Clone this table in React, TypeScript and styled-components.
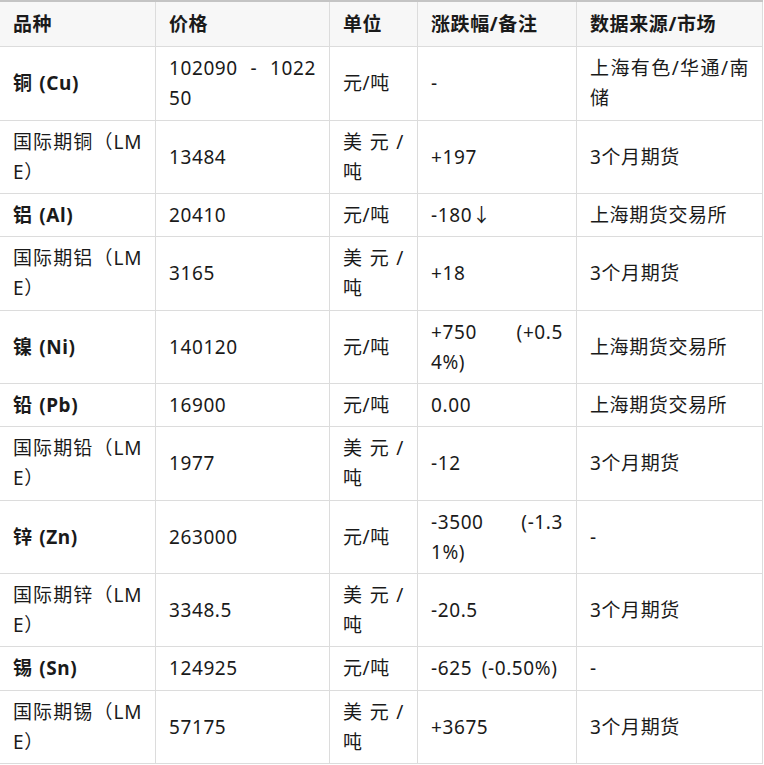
import React from 'react';
import styled, { createGlobalStyle } from 'styled-components';

const GlobalStyle = createGlobalStyle`
  html, body {
    margin: 0;
    padding: 0;
    background: #ffffff;
  }
  body {
    font-family: "Noto Sans", "Noto Sans CJK SC", sans-serif;
    color: #1a1a1a;
  }
`;

const Wrapper = styled.div`
  width: 764px;
  overflow: hidden;
`;

const Table = styled.table`
  border-collapse: collapse;
  table-layout: fixed;
  width: 763px;
  margin-left: -1px;
  font-size: 19px;
  letter-spacing: 0.6px;
  word-spacing: 4px;
  line-height: 30.2px;
`;

const HeadCell = styled.th`
  background: #f7f7f7;
  border: 1px solid #dcdcdc;
  border-top: 2px solid #c4c4c4;
  padding: 7px 13px;
  text-align: left;
  font-weight: 700;
  white-space: nowrap;
`;

const Cell = styled.td<{ $bold?: boolean }>`
  border: 1px solid #dcdcdc;
  padding: 6px 13px;
  vertical-align: middle;
  text-align: justify;
  word-break: break-all;
  font-weight: ${(p) => (p.$bold ? 700 : 400)};
  word-spacing: ${(p) => (p.$bold ? '1px' : '4px')};
`;

type Row = [string, string, string, string, string];

const columns = [
  { title: '品种', width: 156 },
  { title: '价格', width: 174 },
  { title: '单位', width: 88 },
  { title: '涨跌幅/备注', width: 159 },
  { title: '数据来源/市场', width: 186 },
];

const rows: Row[] = [
  ['铜 (Cu)', '102090 - 102250', '元/吨', '-', '上海有色/华通/南储'],
  ['国际期铜（LME）', '13484', '美元/吨', '+197', '3个月期货'],
  ['铝 (Al)', '20410', '元/吨', '-180↓', '上海期货交易所'],
  ['国际期铝（LME）', '3165', '美元/吨', '+18', '3个月期货'],
  ['镍 (Ni)', '140120', '元/吨', '+750 (+0.54%)', '上海期货交易所'],
  ['铅 (Pb)', '16900', '元/吨', '0.00', '上海期货交易所'],
  ['国际期铅（LME）', '1977', '美元/吨', '-12', '3个月期货'],
  ['锌 (Zn)', '263000', '元/吨', '-3500 (-1.31%)', '-'],
  ['国际期锌（LME）', '3348.5', '美元/吨', '-20.5', '3个月期货'],
  ['锡 (Sn)', '124925', '元/吨', '-625 (-0.50%)', '-'],
  ['国际期锡（LME）', '57175', '美元/吨', '+3675', '3个月期货'],
];

export default function App() {
  return (
    <Wrapper>
      <GlobalStyle />
      <Table>
        <colgroup>
          {columns.map((c) => (
            <col key={c.title} style={{ width: c.width }} />
          ))}
        </colgroup>
        <thead>
          <tr>
            {columns.map((c) => (
              <HeadCell key={c.title}>{c.title}</HeadCell>
            ))}
          </tr>
        </thead>
        <tbody>
          {rows.map((r) => (
            <tr key={r[0]}>
              <Cell $bold={!r[0].startsWith('国际')}>{r[0]}</Cell>
              <Cell>{r[1]}</Cell>
              <Cell>{r[2]}</Cell>
              <Cell>{r[3]}</Cell>
              <Cell>{r[4]}</Cell>
            </tr>
          ))}
        </tbody>
      </Table>
    </Wrapper>
  );
}
